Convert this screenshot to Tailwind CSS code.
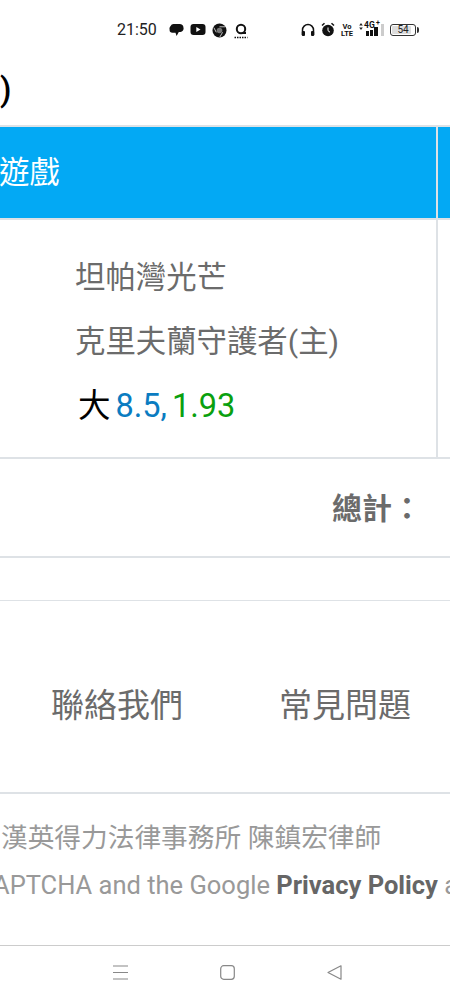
<!doctype html>
<html lang="zh-Hant">
<head>
<meta charset="utf-8">
<script src="https://cdn.jsdelivr.net/npm/@tailwindcss/browser@4"></script>
</head>
<body class="bg-white">
<div class="relative w-[450px] h-[1000px] overflow-hidden bg-white font-['Roboto','Noto_Sans_CJK_TC',sans-serif] text-[#6b6b6b]">
  <!-- status bar -->
  <div class="h-[60px] relative">
    <div class="absolute left-[117px] top-[21px] text-[16px] leading-[18px] text-[#222]">21:50</div>
    <svg class="absolute left-[169px] top-[23px]" width="15" height="15" viewBox="0 0 15 15"><path d="M4.5 1h6a4 4 0 0 1 4 3.7 3.5 3.5 0 0 1-3 4.3H9.8L7.6 13 6.5 9.8H3.5A3 3 0 0 1 .6 6.5 3.5 3.5 0 0 1 1.6 3 3.5 3.5 0 0 1 4.5 1z" fill="#111"/></svg>
    <svg class="absolute left-[190px] top-[23px]" width="16" height="14" viewBox="0 0 16 14"><rect x="0.5" y="1" width="15" height="11" rx="3" fill="#111"/><path d="M6.3 4v5l4.2-2.5z" fill="#fff"/></svg>
    <svg class="absolute left-[212px] top-[23px]" width="15" height="15" viewBox="0 0 15 15"><circle cx="7.5" cy="7.5" r="7" fill="#111"/><circle cx="7.5" cy="7.5" r="2.8" fill="#777"/><path d="M7.5 3.8h5.5M4.3 9.3 1.8 4.6M10.6 9.3 7.8 14" stroke="#eee" stroke-width="0.8"/></svg>
    <svg class="absolute left-[234px] top-[23px]" width="14" height="16" viewBox="0 0 14 16"><circle cx="7" cy="6" r="4.2" fill="none" stroke="#111" stroke-width="2"/><path d="M9 10h3" stroke="#111" stroke-width="2"/><path d="M.5 14.5h13" stroke="#111" stroke-width="1.6" stroke-dasharray="1.5 1"/></svg>
    <svg class="absolute left-[301px] top-[23px]" width="14" height="14" viewBox="0 0 14 14"><path d="M1.5 12V7a5.5 5.5 0 0 1 11 0v5" fill="none" stroke="#111" stroke-width="1.5"/><rect x="0.8" y="8" width="3.2" height="5" rx="1" fill="#111"/><rect x="10" y="8" width="3.2" height="5" rx="1" fill="#111"/></svg>
    <svg class="absolute left-[321px] top-[22px]" width="14" height="15" viewBox="0 0 14 15"><circle cx="7" cy="8.5" r="5.8" fill="#111"/><path d="M1 3.5 3.5 1.2M13 3.5 10.5 1.2" stroke="#111" stroke-width="1.5"/><path d="M7 5.5v3.2l2 1.5" fill="none" stroke="#fff" stroke-width="1"/></svg>
    <div class="absolute left-[341px] top-[23px] w-[12px] text-center text-[7.5px] leading-[7px] font-bold text-[#111]">Vo<br>LTE</div>
    <svg class="absolute left-[359px] top-[23px]" width="4" height="7" viewBox="0 0 4 7"><path d="M2 0 3.8 2.500H.2zM2 7 3.800 4.500H.2z" fill="#222"/></svg>
    <div class="absolute left-[364px] top-[21px] text-[8.5px] leading-[9px] font-bold text-[#111] whitespace-nowrap">4G</div>
    <div class="absolute left-[376px] top-[20px] text-[7px] leading-[7px] font-bold text-[#111]">+</div>
    <div class="absolute left-[366px] top-[24px] flex items-end gap-[1px] h-[12px]">
      <span class="w-[3px] h-[5px] bg-[#111]"></span><span class="w-[3px] h-[6px] bg-[#111]"></span><span class="w-[4px] h-[9px] bg-[#111]"></span><span class="w-[3px] h-[12px] ml-[2px] bg-[#ccc]"></span>
    </div>
    <div class="absolute left-[390px] top-[24px] w-[26px] h-[12px] border border-[#333] rounded-[3px] p-[1px]">
      <div class="w-[19px] h-full bg-[#ddd] rounded-[1px]"></div>
      <div class="absolute inset-0 text-center text-[10px] leading-[10px] text-[#222]">54</div>
    </div>
    <div class="absolute left-[417px] top-[27px] w-[2px] h-[6px] bg-[#333] rounded-r-sm"></div>
  </div>
  <!-- heading -->
  <div class="h-[65px] text-[33px] leading-[60px] text-black font-medium">)</div>
  <!-- table -->
  <div class="border-t-2 border-b-2 border-[#dee2e6] bg-[#03a9f4] h-[95px] flex">
    <div class="w-[436px] flex items-center text-[30.4px] text-white h-[91px]"><span class="-ml-[1px]">遊戲</span></div>
    <div class="w-[2px] h-[91px] bg-[#dee2e6]"></div>
  </div>
  <div class="flex h-[239px] border-b-2 border-[#dee2e6]">
    <div class="w-[436px] pl-[75px] pt-[38px]">
      <div class="text-[30.4px] leading-[40px]">坦帕灣光芒</div>
      <div class="text-[30.4px] leading-[40px] mt-[24px]">克里夫蘭守護者(主)</div>
      <div class="text-[32.5px] leading-[40px] mt-[24px] pl-[3px] whitespace-nowrap flex"><span class="text-black mr-[5px]">大</span><span class="text-[#0a7cc1] mr-[5px]">8.5,</span><span class="text-[#0aa00f]">1.93</span></div>
    </div>
    <div class="w-[2px] bg-[#dee2e6]"></div>
  </div>
  <div class="h-[99px] border-b-2 border-[#dee2e6] flex pt-[30px] pl-[332px]">
    <span class="text-[30px] leading-[40px] font-bold whitespace-nowrap">總計：</span>
  </div>
  <div class="h-[43px] border-b border-[#dee2e6]"></div>
  <!-- footer links -->
  <div class="h-[193px] border-b-2 border-[#dee2e6] flex text-[33px] leading-[44px] pt-[83px] pl-[51px] gap-[96px] whitespace-nowrap">
    <span>聯絡我們</span><span>常見問題</span>
  </div>
  <div class="h-[152px] border-b border-[#ccc] text-[#999] whitespace-nowrap overflow-hidden">
    <div class="text-[26.7px] leading-[36px] pt-[26px] pl-[1px]">漢英得力法律事務所 陳鎮宏律師</div>
    <div class="text-[25.5px] leading-[36px] mt-[11px] -ml-[7px]">APTCHA and the Google <b class="text-[#666]">Privacy Policy</b> and</div>
  </div>
  <!-- nav -->
  <div class="relative h-[54px]">
    <svg class="absolute left-[112px] top-[18px]" width="17" height="17" viewBox="0 0 17 17"><path d="M1 2h15M1 8.5h15M1 15h15" stroke="#888" stroke-width="1.2"/></svg>
    <svg class="absolute left-[220px] top-[19px]" width="15" height="15" viewBox="0 0 15 15"><rect x="0.7" y="0.7" width="13.6" height="13.6" rx="3" fill="none" stroke="#888" stroke-width="1.2"/></svg>
    <svg class="absolute left-[327px] top-[19px]" width="15" height="15" viewBox="0 0 15 15"><path d="M14 0.8v13.4L1 7.5z" fill="none" stroke="#888" stroke-width="1.2" stroke-linejoin="round"/></svg>
  </div>
</div>
</body>
</html>
